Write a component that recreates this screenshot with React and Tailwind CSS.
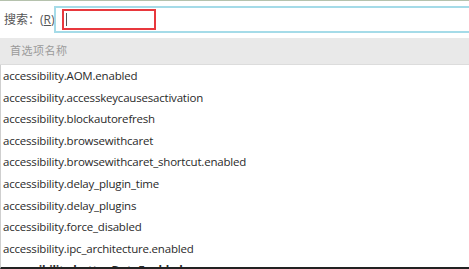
const prefs = [
  'accessibility.AOM.enabled',
  'accessibility.accesskeycausesactivation',
  'accessibility.blockautorefresh',
  'accessibility.browsewithcaret',
  'accessibility.browsewithcaret_shortcut.enabled',
  'accessibility.delay_plugin_time',
  'accessibility.delay_plugins',
  'accessibility.force_disabled',
  'accessibility.ipc_architecture.enabled',
];

export default function App() {
  return (
    <div
      className="flex h-[269px] w-[469px] flex-col overflow-hidden bg-white text-[#2a2a2a]"
      style={{ fontFamily: '"Open Sans", "Noto Sans CJK SC", sans-serif' }}
    >
      {/* 搜索栏 */}
      <div className="flex h-[38px] shrink-0 items-center border-t border-[#b5c2ad] pl-[4px]">
        <span className="w-[50px] shrink-0 whitespace-nowrap text-[12px] text-[#555]">
          搜索：(<span className="underline">R</span>)
        </span>
        <div className="-mr-[2px] flex h-[27px] flex-1 items-center border-2 border-[#a5dbe8] bg-white">
          <div className="ml-[6px] flex h-[21px] w-[94px] items-center border-2 border-[#e8383d]">
            <div className="ml-[2px] h-[13px] w-px bg-[#555]" />
          </div>
        </div>
      </div>

      {/* 表头 */}
      <div className="flex h-[27px] shrink-0 items-center border-b border-[#dcdcdc] bg-[#e9e9e9] pl-[10px] text-[11px] tracking-[0.5px] text-[#9a9a9a]">
        首选项名称
      </div>

      {/* 列表 */}
      <div className="flex-1 overflow-hidden border-b-2 border-l border-b-[#222] border-l-[#cfcfcf]">
        {prefs.map((p) => (
          <div key={p} className="flex h-[21.6px] items-center whitespace-nowrap pl-[2px] text-[11.5px] leading-none tracking-[-0.2px]">
            {p}
          </div>
        ))}
        <div className="flex h-[21.6px] items-center whitespace-nowrap pl-[2px] text-[11.5px] font-bold tracking-[-0.2px]">
          accessibility.buttonDataEnabled
        </div>
      </div>
    </div>
  );
}
